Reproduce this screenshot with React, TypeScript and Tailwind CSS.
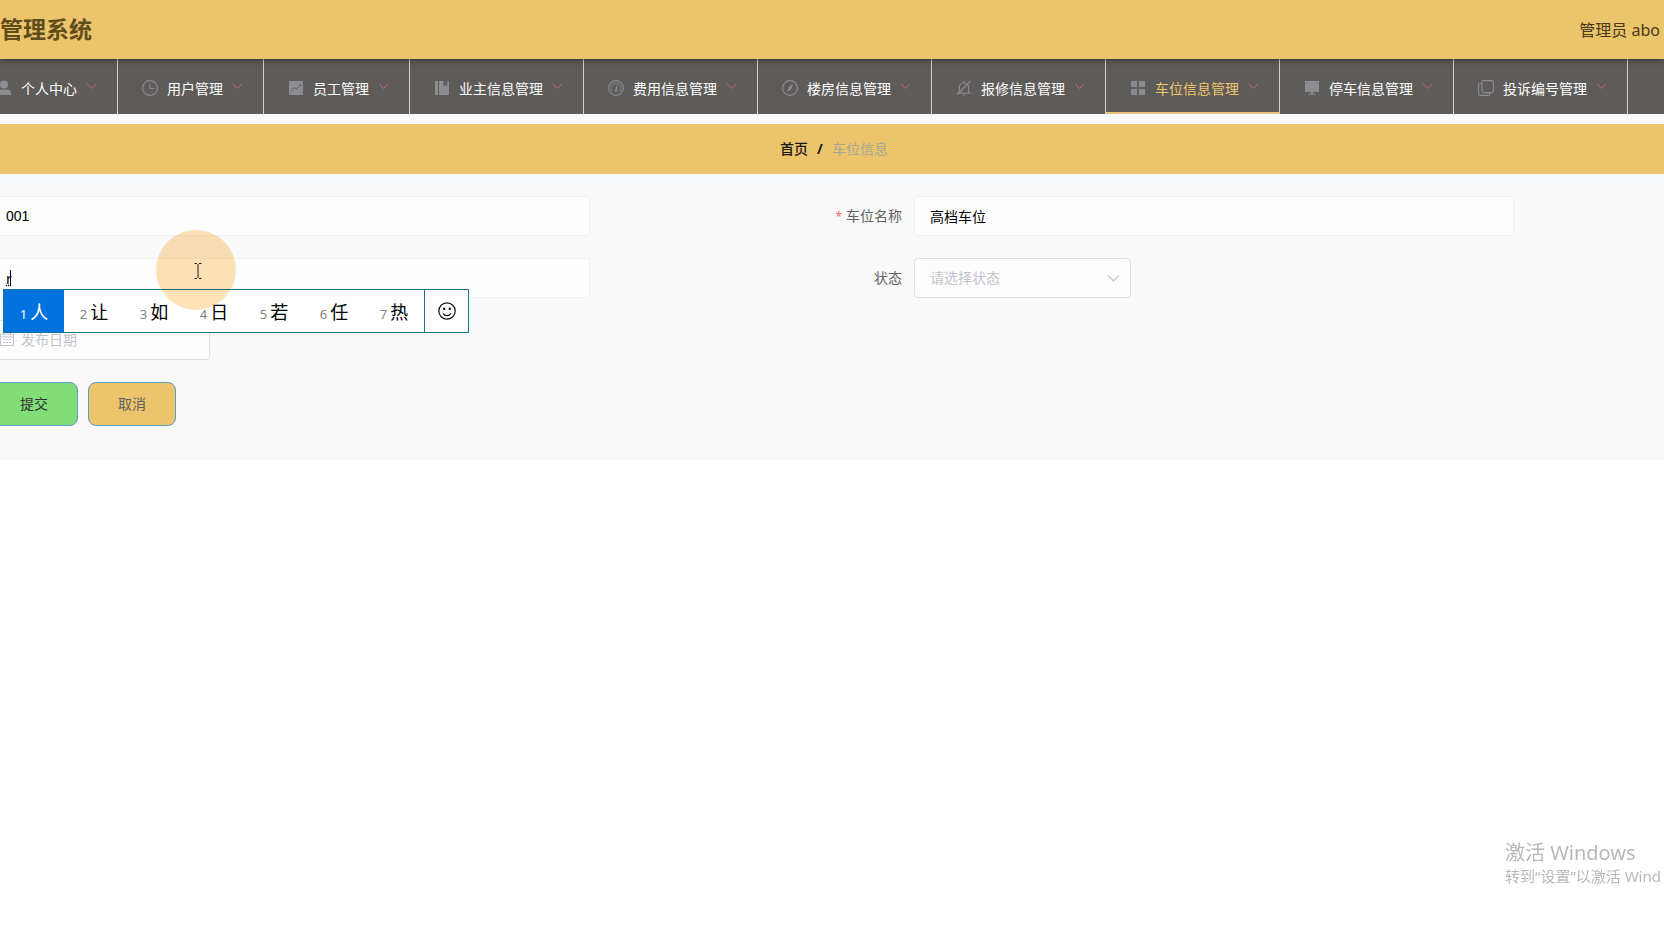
import { useState } from "react";
import type { ReactNode } from "react";

const icons: Record<string, ReactNode> = {
  user: (
    <g fill="currentColor">
      <circle cx="8" cy="4.500" r="4" />
      <path d="M1 15v-2.500a3 3 0 0 1 3-3h8a3 3 0 0 1 3 3V15z" />
    </g>
  ),
  time: (
    <g fill="none" stroke="currentColor">
      <circle cx="8" cy="8" r="7.400" strokeWidth="1.100" />
      <path d="M8 3.500V8.500H12" strokeWidth="1.100" />
    </g>
  ),
  marketing: (
    <g>
      <path d="M1 1h14v14H1z" fill="currentColor" />
      <path d="M3.500 10.500 6.500 7.500 8.500 9.500 12 5.500" fill="none" stroke="#5e5b59" strokeWidth="1" />
      <circle cx="12.400" cy="5.300" r="0.900" fill="#5e5b59" />
    </g>
  ),
  management: (
    <g fill="currentColor">
      <path d="M1 1h3v14H1z" />
      <path d="M5 1h4.500v5.500l1.900-1.300 1.900 1.300V1H15v14H5z" />
    </g>
  ),
  odometer: (
    <g fill="none" stroke="currentColor">
      <circle cx="8" cy="8" r="7.400" strokeWidth="1.100" />
      <path d="M4.300 11.500A5 5 0 1 1 11.700 11.500" strokeWidth="1" />
      <circle cx="8" cy="10.500" r="1.300" />
      <path d="M8.400 9.200 9.300 5.200" strokeWidth="1.100" />
    </g>
  ),
  discover: (
    <g>
      <circle cx="8" cy="8" r="7.400" fill="none" stroke="currentColor" strokeWidth="1.100" />
      <path d="M11 4 9.200 9.200 5.300 12 6.800 7z" fill="currentColor" />
    </g>
  ),
  muted: (
    <g fill="none" stroke="currentColor" strokeWidth="1.100">
      <path d="M.5 13.300h15M3.300 13V7.500a4.700 4.700 0 0 1 9.400 0V13M8 2.800V.8M7 15.300h2" />
      <path d="M14.500 1 1.500 14.500" />
    </g>
  ),
  menu: (
    <g fill="currentColor">
      <rect x="1" y="1" width="6" height="6" rx="0.500" />
      <rect x="9" y="1" width="6" height="6" rx="0.500" />
      <rect x="1" y="9" width="6" height="6" rx="0.500" />
      <rect x="9" y="9" width="6" height="6" rx="0.500" />
    </g>
  ),
  platform: (
    <g fill="currentColor">
      <path d="M1 1h14v11H1z" />
      <path d="M7 12h2v1.300l2.500.6v.8h-7v-.8L7 13.300z" />
    </g>
  ),
  copy: (
    <g fill="none" stroke="currentColor" strokeWidth="1.100">
      <rect x="4" y="0.600" width="11.400" height="12" rx="1.500" />
      <path d="M3.800 3.800H2a1.400 1.400 0 0 0-1.400 1.400V14a1.400 1.400 0 0 0 1.400 1.400h8.500a1.400 1.400 0 0 0 1.400-1.400v-1.200" />
    </g>
  ),
};

const menu = [
  { label: "个人中心", icon: "user" },
  { label: "用户管理", icon: "time" },
  { label: "员工管理", icon: "marketing" },
  { label: "业主信息管理", icon: "management" },
  { label: "费用信息管理", icon: "odometer" },
  { label: "楼房信息管理", icon: "discover" },
  { label: "报修信息管理", icon: "muted" },
  { label: "车位信息管理", icon: "menu", active: true },
  { label: "停车信息管理", icon: "platform" },
  { label: "投诉编号管理", icon: "copy" },
];

const candidates = ["人", "让", "如", "日", "若", "任", "热"];

const inputClass =
  "h-10 w-full rounded border border-[#f0f0f0] bg-[#fdfdfd] px-[15px] text-sm text-black outline-none placeholder:text-[#c0c4cc]";

function Chevron({ className }: { className: string }) {
  return (
    <svg viewBox="0 0 11 11" className={className} fill="none" stroke="currentColor" aria-hidden="true">
      <path d="M1 3l4.500 4.500L10 3" />
    </svg>
  );
}

function NavItem({ label, icon, active }: { label: string; icon: string; active?: boolean }) {
  return (
    <a
      href="#"
      className={
        active
          ? "flex shrink-0 items-center border-r border-b-2 border-r-[#d4d4d4] border-b-[#eac080] pt-1 pr-5 pl-6 text-[#ecc56e]"
          : "flex shrink-0 items-center border-r border-[#d4d4d4] pt-0.5 pr-5 pl-6 text-white"
      }
    >
      <svg viewBox="0 0 16 16" className="mr-[9px] size-4 text-[#8b8d93]" aria-hidden="true">
        {icons[icon]}
      </svg>
      <span className="pt-0.5">{label}</span>
      <Chevron className="mb-0.5 ml-[9px] size-[11px] text-[#c9608c]" />
    </a>
  );
}

function CandidateBar() {
  return (
    <div className="absolute top-[289px] left-[3px] z-20 flex h-11 border border-[#1b7393] bg-white">
      {candidates.map((word, i) => (
        <button
          key={word}
          type="button"
          className={
            i === 0
              ? "flex w-[60px] items-center justify-center gap-[3px] bg-[#0072e0] pt-0.5 text-lg text-white"
              : "flex w-[60px] items-center justify-center gap-[3px] pt-0.5 text-lg text-black"
          }
        >
          <span className={i === 0 ? "pt-1 text-[13px]" : "pt-1 text-[13px] text-[#808080]"}>{i + 1}</span>
          {word}
        </button>
      ))}
      <button type="button" aria-label="表情" className="flex w-11 items-center justify-center border-l border-[#1b7393]">
        <svg viewBox="0 0 18 18" className="size-[18px]" fill="none" stroke="#111" strokeWidth="1.200">
          <circle cx="9" cy="9" r="8.200" />
          <path d="M5 11.200a4.500 4.500 0 0 0 8 0" />
          <circle cx="6.200" cy="6.800" r="0.600" fill="#111" />
          <circle cx="11.800" cy="6.800" r="0.600" fill="#111" />
        </svg>
      </button>
    </div>
  );
}

export default function App() {
  const [code, setCode] = useState("001");
  const [name, setName] = useState("高档车位");
  const [draft, setDraft] = useState("r");
  const [status, setStatus] = useState("");

  return (
    <div className="relative min-h-screen overflow-hidden bg-white font-['Noto_Sans','Noto_Sans_CJK_SC',sans-serif] text-sm">
      <header className="relative z-10 flex h-[59px] items-center justify-between bg-[#ebc46c] pr-1 shadow-[0_1px_6px_rgba(0,0,0,0.5)]">
        <h1 className="text-[23px] font-bold text-[#5f4d1c]">管理系统</h1>
        <span className="text-base text-[#47391a]">管理员 abo</span>
      </header>

      <nav className="flex h-[55px] bg-[#5e5b59]">
        <div className="-ml-7 flex">
          {menu.map((item) => (
            <NavItem key={item.label} {...item} />
          ))}
        </div>
      </nav>

      <main className="bg-[#f8f9fa] pt-2.5">
        <div className="flex h-[50px] items-center justify-center bg-[#ebc46c] pl-1">
          <a href="#" className="font-medium text-[#1c1a14]">
            首页
          </a>
          <span className="mx-[9px] font-bold text-[#1c1a14]">/</span>
          <span className="text-[#aaa696]">车位信息</span>
        </div>

        <form
          onSubmit={(e) => e.preventDefault()}
          className="mt-2.5 -ml-2.5 bg-[#f9f9f9] pt-3 pb-[34px]"
        >
          <div className="grid grid-cols-2 gap-y-[22px]">
            <div className="max-w-[600px]">
              <input
                aria-label="车位编号"
                value={code}
                onChange={(e) => setCode(e.target.value)}
                className={`${inputClass} font-['Liberation_Sans',sans-serif]`}
              />
            </div>
            <div className="flex items-center">
              <label htmlFor="name" className="w-[87px] pr-3 text-right text-[#606266]">
                <span className="mr-1 text-xs text-[#f56c6c]">*</span>
                车位名称
              </label>
              <input
                id="name"
                value={name}
                onChange={(e) => setName(e.target.value)}
                className={`${inputClass} max-w-[600px]`}
              />
            </div>
            <div className="relative max-w-[600px]">
              <input
                aria-label="车位位置"
                value={draft}
                onChange={(e) => setDraft(e.target.value)}
                className={`${inputClass} underline decoration-dotted`}
              />
              <span className="absolute top-3 left-5 h-4 w-px bg-black" />
            </div>
            <div className="flex items-center">
              <label htmlFor="status" className="w-[87px] pr-3 text-right text-[#606266]">
                状态
              </label>
              <div className="relative w-[217px]">
                <select
                  id="status"
                  value={status}
                  onChange={(e) => setStatus(e.target.value)}
                  className="h-10 w-full appearance-none rounded border border-[#dcdfe6] bg-[#fdfdfd] px-[15px] text-[#c0c4cc] outline-none"
                >
                  <option value="">请选择状态</option>
                </select>
                <Chevron className="pointer-events-none absolute top-[14px] right-[11px] size-[13px] text-[#c0c4cc]" />
              </div>
            </div>
            <div className="relative w-[220px]">
              <input
                aria-label="发布日期"
                placeholder="发布日期"
                className="h-10 w-full rounded border border-[#dcdfe6] bg-[#fdfdfd] pr-[15px] pb-0.5 pl-[30px] outline-none placeholder:text-[#c0c4cc]"
              />
              <svg
                viewBox="0 0 14 14"
                className="absolute top-3 left-[10px] size-[14px]"
                fill="none"
                stroke="#c0c4cc"
                aria-hidden="true"
              >
                <path d="M.5 2h13v11.500H.5zM.5 5h13M3.500.3v2.900M10.500.3v2.900M3 7.500h2M6 7.500h2M9 7.500h2M3 10.500h2M6 10.500h2M9 10.500h2" />
              </svg>
            </div>
          </div>

          <div className="mt-[22px] flex gap-2.5">
            <button
              type="submit"
              className="h-11 w-[88px] rounded-lg border border-[#559fc4] bg-[#82df78] text-[#333]"
            >
              提交
            </button>
            <button
              type="button"
              className="h-11 w-[88px] rounded-lg border border-[#559fc4] bg-[#ebc46c] text-[#606266]"
            >
              取消
            </button>
          </div>
        </form>
      </main>

      <CandidateBar />

      {/* pointer highlight */}
      <div className="pointer-events-none absolute top-[230px] left-[156px] z-30 flex size-20 items-center justify-center rounded-full bg-[#fee2b8] mix-blend-multiply">
        <svg viewBox="0 0 8 16" className="mt-0.5 ml-1 h-4 w-2" fill="none" stroke="#222" aria-hidden="true">
          <path d="M.5.5H3M5 .5h2.500M4 1v14M.5 15.500H3M5 15.500h2.500" />
        </svg>
      </div>

      <div className="pointer-events-none fixed right-0 bottom-[49px] w-[159px] overflow-hidden whitespace-nowrap text-[#b8b8b8]">
        <p className="text-xl leading-[25px]">激活 Windows</p>
        <p className="text-[15px] leading-[22px]">转到“设置”以激活 Wind</p>
      </div>
    </div>
  );
}
